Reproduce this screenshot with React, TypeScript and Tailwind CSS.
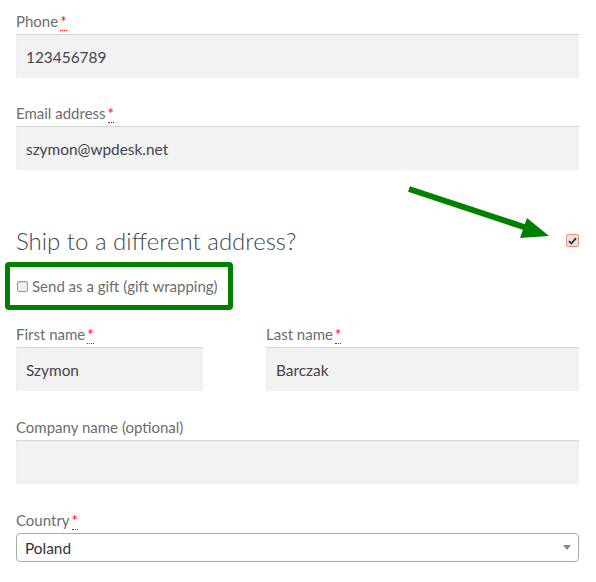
import React from "react";

function Req() {
  return (
    <abbr
      title="required"
      className="ml-[2px] text-[#ff0000] no-underline border-b border-dotted border-[#ff0000] leading-none"
    >
      *
    </abbr>
  );
}

function Field({
  label,
  required,
  value,
  className = "",
}: {
  label: string;
  required?: boolean;
  value: string;
  className?: string;
}) {
  return (
    <div className={className}>
      <label className="block h-6 leading-[22px] text-[15px] text-[#6d6d6d]">
        {label}
        {required && <Req />}
      </label>
      <div className="h-[44px] bg-[#f2f2f2] shadow-[inset_0_1px_1px_rgba(0,0,0,0.125)] px-[10px] pt-[3px] flex items-center text-[15.4px] text-[#43454b]">
        {value}
      </div>
    </div>
  );
}

export default function App() {
  return (
    <div
      className="relative w-[596px] h-[582px] bg-white overflow-hidden"
      style={{ fontFamily: '"Source Sans Pro", Lato, "Open Sans", sans-serif' }}
    >
      <div className="ml-4 w-[563px] pt-[10px]">
        <Field label="Phone" required value="123456789" />
        <Field label="Email address" required value="szymon@wpdesk.net" className="mt-6" />

        {/* ship to different address */}
        <div className="mt-[56px] h-[30px] flex items-center justify-between">
          <h3 className="text-[24px] font-light leading-[30px] text-[#43454b]">
            Ship to a different address?
          </h3>
          <span className="-mt-[1px] w-[13px] h-[13px] rounded-[2px] border border-[#e9906e] bg-[#e4e4e4] flex items-center justify-center">
            <svg width="9" height="8" viewBox="0 0 9 8">
              <path d="M1 4.2 L3.4 6.5 L8 1.2" fill="none" stroke="#333" strokeWidth="1.8" />
            </svg>
          </span>
        </div>
      </div>

      {/* gift box */}
      <div className="ml-[5px] mt-[6px] w-[228px] h-[48px] border-[5px] border-[#008000] rounded-[4px] flex items-center pl-[7px]">
        <span className="w-[11px] h-[11px] rounded-[2px] border border-[#9a9a9a] bg-[#f0f0f0] shadow-[inset_0_1px_1px_rgba(0,0,0,0.1)]" />
        <span className="ml-[4px] text-[15px] text-[#6d6d6d]">Send as a gift (gift wrapping)</span>
      </div>

      <div className="ml-4 w-[563px] mt-[13px]">
        <div className="flex gap-[63px]">
          <Field label="First name" required value="Szymon" className="w-[187px]" />
          <Field label="Last name" required value="Barczak" className="flex-1" />
        </div>
        <Field label="Company name (optional)" value="" className="mt-[25px]" />

        <div className="mt-[25px]">
          <label className="block h-6 leading-[22px] text-[15px] text-[#6d6d6d]">
            Country
            <Req />
          </label>
          <div className="h-[29px] rounded-[4px] border border-[#aaaaaa] bg-white flex items-center justify-between pl-[8px] pr-[7px] text-[15.4px] text-[#333]">
            <span className="pt-[2px]">Poland</span>
            <svg width="8" height="5" viewBox="0 0 8 5">
              <path d="M0 0 L8 0 L4 5 Z" fill="#888" />
            </svg>
          </div>
        </div>
      </div>

      {/* annotation arrow */}
      <svg className="absolute left-0 top-0 pointer-events-none" width="596" height="582">
        <line x1="409" y1="189" x2="530" y2="229" stroke="#008000" strokeWidth="6" />
        <polygon points="549,236 527,218 520,238" fill="#008000" />
      </svg>
    </div>
  );
}
